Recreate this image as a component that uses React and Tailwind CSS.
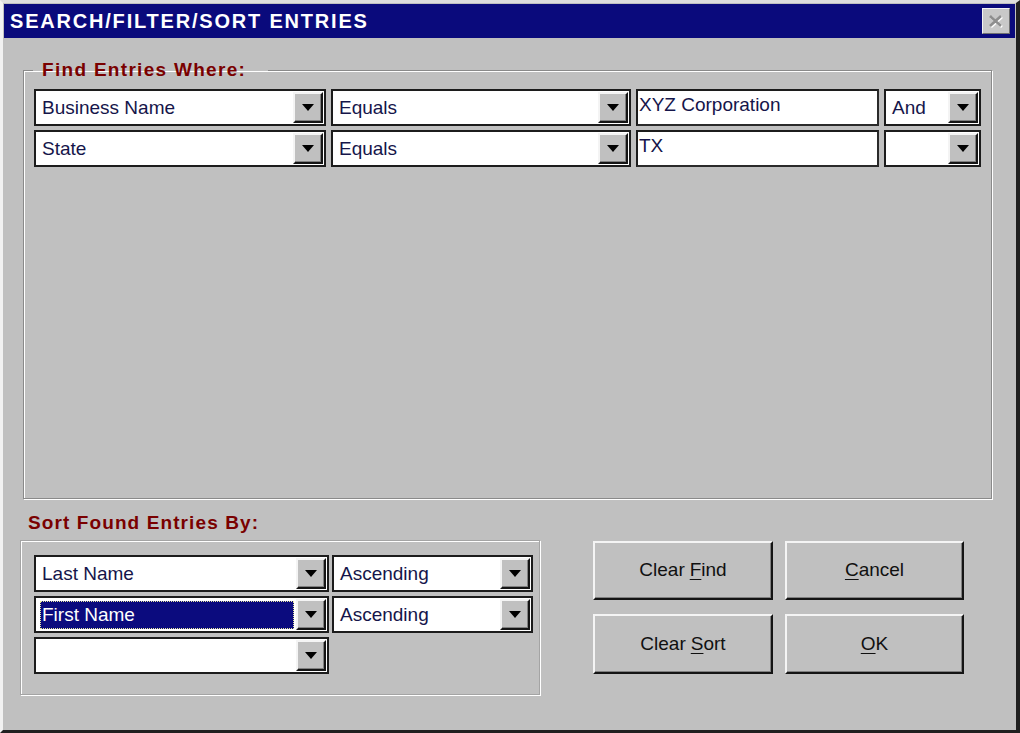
import { useState } from "react";

// raised 3d button edge used by the dropdown arrows and push buttons
const raised =
  "border-2 border-t-[#f4f4f4] border-l-[#f4f4f4] border-b-[#141414] border-r-[#141414] shadow-[inset_-1px_-1px_0_#808080]";

function Arrow() {
  return (
    <svg width="12" height="7" viewBox="0 0 12 7">
      <polygon points="0,0 12,0 6,7" fill="#000" />
    </svg>
  );
}

function DropButton() {
  return (
    <div
      className={`flex h-[31px] w-[30px] shrink-0 items-center justify-center bg-[#c0c0c0] ${raised}`}
    >
      <Arrow />
    </div>
  );
}

function Combo({ value, className, selected }) {
  return (
    <div
      className={`flex h-[37px] items-center border-2 border-[#1c1c1c] bg-white pl-[4px] pr-[1px] ${className}`}
    >
      <div className="mr-[2px] flex h-[28px] min-w-0 flex-1 items-center">
        {selected ? (
          <span className="flex h-full w-full items-center truncate border border-dotted border-[#e8e8a0] bg-[#0b0b7e] pl-[1px] pt-[1px] text-white">
            {value}
          </span>
        ) : (
          <span className="truncate pl-[2px] pt-[2px] text-[#15154a]">{value}</span>
        )}
      </div>
      <DropButton />
    </div>
  );
}

function TextBox({ value, className }) {
  return (
    <div
      className={`h-[37px] border-2 border-t-[#1c1c1c] border-l-[#1c1c1c] border-b-[#2a2a2a] border-r-[#2a2a2a] bg-white pl-[1px] pt-[3px] leading-[22px] text-[#15154a] ${className}`}
    >
      {value}
    </div>
  );
}

function PushButton({ children }) {
  return (
    <button
      className={`flex items-center justify-center bg-[#c0c0c0] text-[19px] text-[#101010] ${raised}`}
    >
      {children}
    </button>
  );
}

export default function App() {
  const [findRows] = useState([
    { field: "Business Name", op: "Equals", value: "XYZ Corporation", join: "And" },
    { field: "State", op: "Equals", value: "TX", join: "" },
  ]);

  return (
    <div className="flex h-[733px] w-[1020px] flex-col overflow-hidden border-t-[3px] border-l-[3px] border-r-[4px] border-b-[3px] border-t-[#dedede] border-l-[#f2f2f2] border-r-[#202020] border-b-[#202020] bg-[#c0c0c0] px-[1px] pt-[1px] font-['Liberation_Sans',Arial,sans-serif] text-[19px]">
      {/* title bar */}
      <div className="flex h-[34px] shrink-0 items-center justify-between bg-[#0a0a7c] pl-[6px] pr-[5px]">
        <span className="text-[20px] font-bold tracking-[1.8px] text-white">
          SEARCH/FILTER/SORT ENTRIES
        </span>
        <div className="flex h-[26px] w-[28px] items-center justify-center border border-t-[#f4f4f4] border-l-[#f4f4f4] border-b-[#707070] border-r-[#707070] bg-[#c8c8c8]">
          <svg width="18" height="16" viewBox="0 0 18 16">
            <path d="M4 4 L15 14 M15 4 L4 14" stroke="#ffffff" strokeWidth="2.6" />
            <path d="M3 3 L14 13 M14 3 L3 13" stroke="#8e8e8e" strokeWidth="2.6" />
          </svg>
        </div>
      </div>

      {/* find criteria */}
      <fieldset className="ml-[19px] mr-[24px] mt-[22px] h-[439px] shrink-0 border border-[#8a8a8a] shadow-[inset_1px_1px_0_#ffffff,1px_1px_0_#ffffff]">
        <legend className="ml-[9px] pl-[9px] pr-[22px] text-[19px] font-bold leading-[20px] tracking-[1.3px] text-[#7a0000]">
          Find Entries Where:
        </legend>
        <div className="flex flex-col gap-[4px] px-[10px] pt-[9px]">
          {findRows.map((row) => (
            <div key={row.field} className="flex gap-[5px]">
              <Combo value={row.field} className="w-[292px]" />
              <Combo value={row.op} className="w-[300px]" />
              <TextBox value={row.value} className="w-[243px]" />
              <Combo value={row.join} className="w-[97px]" />
            </div>
          ))}
        </div>
      </fieldset>

      {/* sort + buttons */}
      <div className="mt-[10px] flex">
        <div className="ml-[16px] flex w-[520px] flex-col">
          <div className="ml-[8px] mt-[3px] text-[19px] font-bold leading-[22px] tracking-[1.1px] text-[#7a0000]">
            Sort Found Entries By:
          </div>
          <div className="mt-[6px] flex h-[155px] flex-col gap-[4px] border border-[#a4a4a4] pl-[13px] pt-[14px] shadow-[inset_1px_1px_0_#ffffff,1px_1px_0_#ffffff]">
            <div className="flex gap-[3px]">
              <Combo value="Last Name" className="w-[295px]" />
              <Combo value="Ascending" className="w-[201px]" />
            </div>
            <div className="flex gap-[3px]">
              <Combo value="First Name" className="w-[295px]" selected />
              <Combo value="Ascending" className="w-[201px]" />
            </div>
            <div className="flex gap-[3px]">
              <Combo value="" className="w-[295px]" />
            </div>
          </div>
        </div>

        <div className="ml-[53px] mt-[32px] grid grid-cols-[180px_179px] grid-rows-[59px_60px] gap-x-[12px] gap-y-[14px]">
          <PushButton>
            Clear <span className="ml-[5px] underline underline-offset-[3px]">F</span>ind
          </PushButton>
          <PushButton>
            <span className="underline underline-offset-[3px]">C</span>ancel
          </PushButton>
          <PushButton>
            Clear <span className="ml-[5px] underline underline-offset-[3px]">S</span>ort
          </PushButton>
          <PushButton>
            <span className="underline underline-offset-[3px]">O</span>K
          </PushButton>
        </div>
      </div>
    </div>
  );
}
